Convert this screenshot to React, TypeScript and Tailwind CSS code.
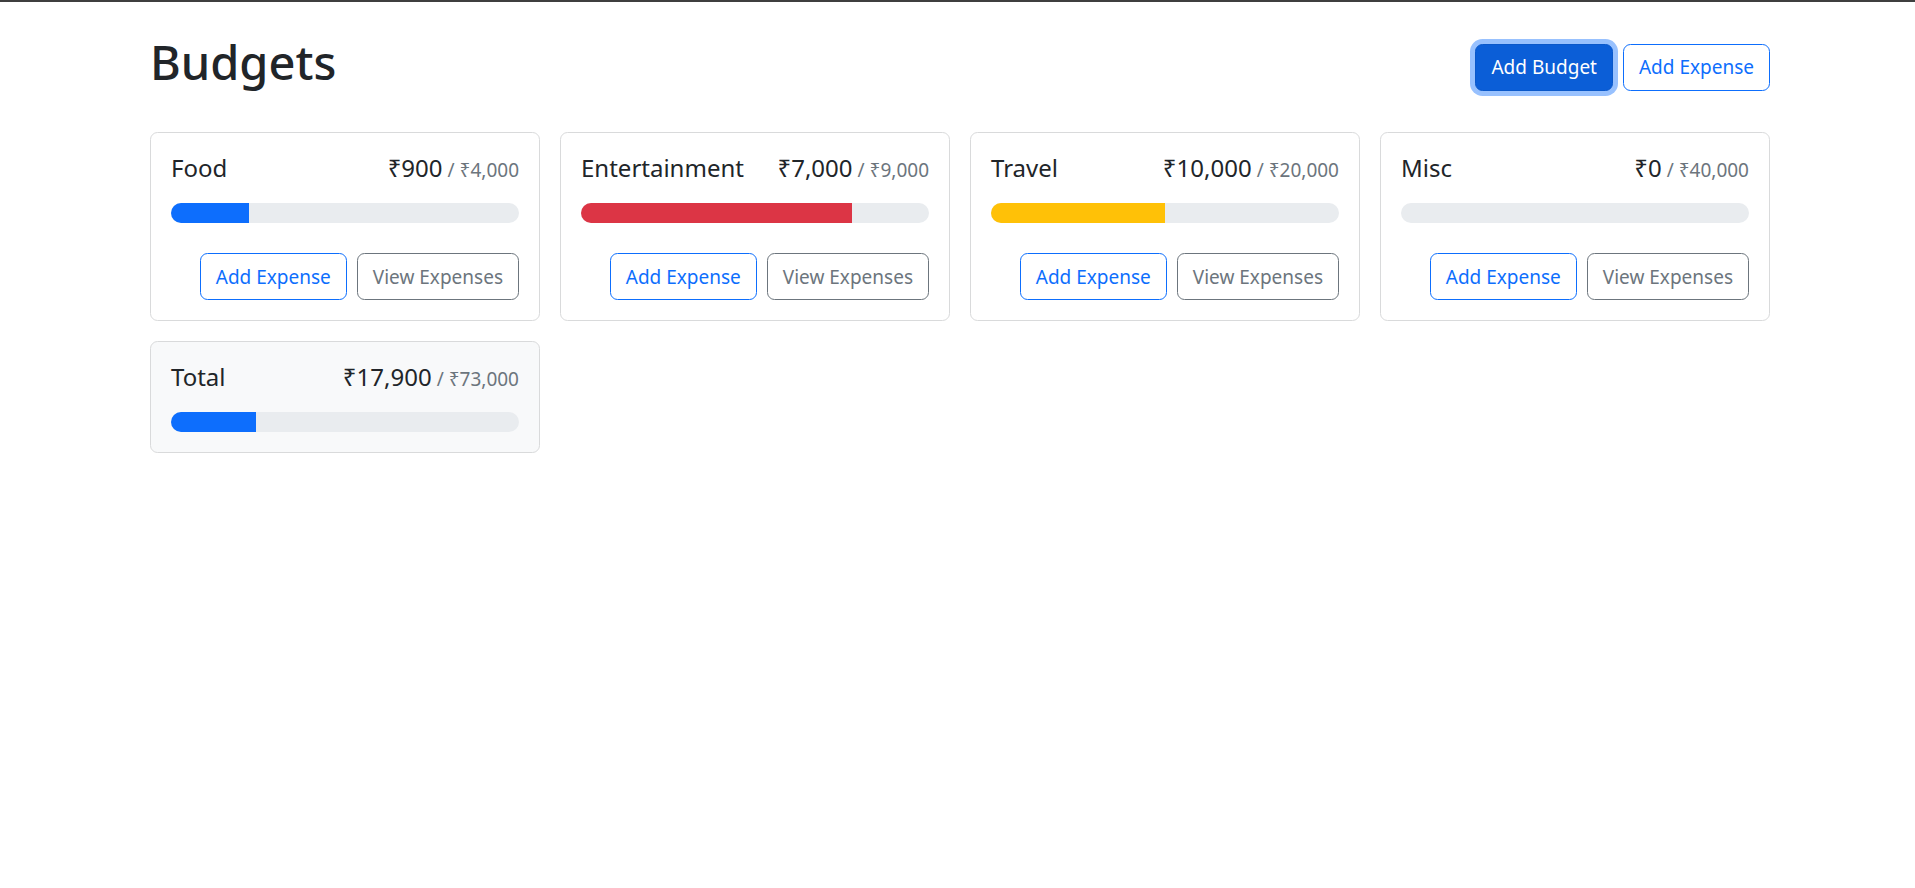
import React from 'react';

interface Budget {
  name: string;
  amount: number;
  max: number;
}

const budgets: Budget[] = [
  { name: 'Food', amount: 900, max: 4000 },
  { name: 'Entertainment', amount: 7000, max: 9000 },
  { name: 'Travel', amount: 10000, max: 20000 },
  { name: 'Misc', amount: 0, max: 40000 },
];

const fmt = (n: number) => '₹' + n.toLocaleString('en-IN');

function barColor(amount: number, max: number) {
  const ratio = amount / max;
  if (ratio < 0.5) return 'bg-[#0d6efd]';
  if (ratio < 0.75) return 'bg-[#ffc107]';
  return 'bg-[#dc3545]';
}

function BudgetCard({ name, amount, max, gray, hideButtons }: Budget & { gray?: boolean; hideButtons?: boolean }) {
  return (
    <div
      className={`border border-[#d9dadb] rounded-[7.5px] p-5 ${gray ? 'bg-[#f8f9fa]' : 'bg-white'}`}
    >
      <div className="flex justify-between items-baseline text-[24px] leading-[30px] mb-5">
        <div className="mr-[10px]">{name}</div>
        <div className="flex items-baseline">
          {fmt(amount)}
          <span className="text-[19px] leading-[24px] text-[#6c757d] ml-[5px]">/ {fmt(max)}</span>
        </div>
      </div>
      <div className="h-5 rounded-full bg-[#e9ecef] overflow-hidden">
        <div className={`h-full ${barColor(amount, max)}`} style={{ width: `${(amount / max) * 100}%` }} />
      </div>
      {!hideButtons && (
        <div className="flex justify-end gap-[10px] mt-[30px]">
          <button className="px-[15px] py-[7.5px] text-[19px] leading-[30px] border border-[#0d6efd] text-[#0d6efd] rounded-[7.5px] bg-white">
            Add Expense
          </button>
          <button className="px-[15px] py-[7.5px] text-[19px] leading-[30px] border border-[#6c757d] text-[#6c757d] rounded-[7.5px] bg-white">
            View Expenses
          </button>
        </div>
      )}
    </div>
  );
}

export default function App() {
  const total = budgets.reduce((s, b) => s + b.amount, 0);
  const totalMax = budgets.reduce((s, b) => s + b.max, 0);

  return (
    <div className="min-h-screen bg-white border-t-2 border-[#3f3f3f] text-[#212529] font-['Noto_Sans',sans-serif]">
      <div className="mx-auto w-[1655px] pl-[20px] pr-[15px] pt-[30px]">
        <div className="flex items-center gap-[10px] mb-[30px]">
          <h1 className="mr-auto text-[47px] leading-[60px] font-medium mb-[10px]">Budgets</h1>
          <button className="px-[15px] py-[7.5px] text-[19px] leading-[30px] border border-[#0a58ca] bg-[#0b5ed7] text-white rounded-[7.5px] shadow-[0_0_0_5px_rgba(49,132,253,0.5)]">
            Add Budget
          </button>
          <button className="px-[15px] py-[7.5px] text-[19px] leading-[30px] border border-[#0d6efd] text-[#0d6efd] rounded-[7.5px] bg-white">
            Add Expense
          </button>
        </div>
        <div className="grid grid-cols-4 gap-5 items-start">
          {budgets.map((b) => (
            <BudgetCard key={b.name} {...b} />
          ))}
          <BudgetCard name="Total" amount={total} max={totalMax} gray hideButtons />
        </div>
      </div>
    </div>
  );
}
